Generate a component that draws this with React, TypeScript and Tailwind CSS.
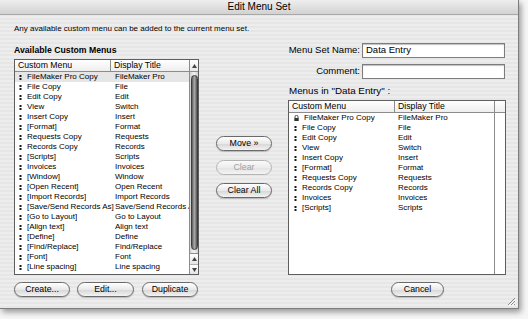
import React from 'react';

const available: [string, string][] = [
  ['FileMaker Pro Copy', 'FileMaker Pro'],
  ['File Copy', 'File'],
  ['Edit Copy', 'Edit'],
  ['View', 'Switch'],
  ['Insert Copy', 'Insert'],
  ['[Format]', 'Format'],
  ['Requests Copy', 'Requests'],
  ['Records Copy', 'Records'],
  ['[Scripts]', 'Scripts'],
  ['Invoices', 'Invoices'],
  ['[Window]', 'Window'],
  ['[Open Recent]', 'Open Recent'],
  ['[Import Records]', 'Import Records'],
  ['[Save/Send Records As]', 'Save/Send Records As'],
  ['[Go to Layout]', 'Go to Layout'],
  ['[Align text]', 'Align text'],
  ['[Define]', 'Define'],
  ['[Find/Replace]', 'Find/Replace'],
  ['[Font]', 'Font'],
  ['[Line spacing]', 'Line spacing'],
];

const inSet: [string, string][] = [
  ['FileMaker Pro Copy', 'FileMaker Pro'],
  ['File Copy', 'File'],
  ['Edit Copy', 'Edit'],
  ['View', 'Switch'],
  ['Insert Copy', 'Insert'],
  ['[Format]', 'Format'],
  ['Requests Copy', 'Requests'],
  ['Records Copy', 'Records'],
  ['Invoices', 'Invoices'],
  ['[Scripts]', 'Scripts'],
];

// little drag handle in front of each menu row
function Handle() {
  return (
    <svg width="3" height="5" viewBox="0 0 3 5" className="shrink-0">
      <rect x="0.5" y="0" width="2" height="2" fill="#1a1a1a" />
      <rect x="0.5" y="3" width="2" height="2" fill="#1a1a1a" />
    </svg>
  );
}

function Lock() {
  return (
    <svg width="5" height="6" viewBox="0 0 5 6" className="shrink-0">
      <path d="M1 3V1.8A1.5 1.5 0 0 1 4 1.8V3" fill="none" stroke="#222" strokeWidth="0.8" />
      <rect x="0.3" y="3" width="4.4" height="3" fill="#333" />
    </svg>
  );
}

function Arrow({ up }: { up?: boolean }) {
  return (
    <svg width="5" height="4" viewBox="0 0 5 4">
      <path d={up ? 'M2.5 0L5 4H0Z' : 'M0 0H5L2.5 4Z'} fill="#444" />
    </svg>
  );
}

function Pill({ children, w, disabled }: { children: React.ReactNode; w: string; disabled?: boolean }) {
  return (
    <button
      className={`${w} h-[15px] rounded-full border flex items-center justify-center text-[8.8px] leading-none ${
        disabled
          ? 'border-[#b4b4b4] text-[#a0a0a0] bg-[linear-gradient(to_bottom,#fafafa,#ececec_50%,#e2e2e2_51%,#f4f4f4)]'
          : 'border-[#6a6a6a] text-black bg-[linear-gradient(to_bottom,#ffffff,#e9e9e9_50%,#d5d5d5_51%,#f3f3f3)] shadow-[0_1px_1px_rgba(0,0,0,0.2)]'
      }`}
    >
      {children}
    </button>
  );
}

function Header({ w1, w2 }: { w1: string; w2: string }) {
  return (
    <div className="h-[12px] flex border-b border-[#8c8c8c] bg-[linear-gradient(to_bottom,#ffffff,#eeeeee)] text-[8.7px] leading-[11px] whitespace-nowrap">
      <div className={`${w1} border-r border-[#8c8c8c] pl-[3px]`}>Custom Menu</div>
      <div className={`${w2} pl-[3px]`}>Display Title</div>
    </div>
  );
}

export default function App() {
  return (
    <div className="w-[528px] h-[319px] bg-[#f6f6f6] overflow-hidden font-['Liberation_Sans',Arial,sans-serif] text-black">
      <div className="relative w-[519px] h-[309px] flex flex-col border-r border-b border-[#7d7d7d] shadow-[2px_3px_6px_rgba(0,0,0,0.4)] bg-[repeating-linear-gradient(to_bottom,#ededed_0px,#ededed_2px,#e6e6e6_2px,#e6e6e6_4px)]">
        {/* title bar */}
        <div className="h-[15px] shrink-0 flex items-center justify-center border-b border-[#a8a8a8] bg-[linear-gradient(to_bottom,#eeeeee,#d2d2d2)] text-[10px] leading-none">
          Edit Menu Set
        </div>

        <div className="flex flex-1 pl-[14px]">
          {/* left side */}
          <div className="w-[258px] flex flex-col">
            <p className="mt-[8px] h-[12px] leading-[12px] text-[8px] whitespace-nowrap">
              Any available custom menu can be added to the current menu set.
            </p>
            <h2 className="mt-[9px] h-[12px] leading-[12px] text-[8.7px] font-bold">Available Custom Menus</h2>
            <div className="mt-[3px] flex">
              <div className="w-[185px] flex flex-col">
                <div className="h-[216px] flex border border-[#5e5e5e] bg-white">
                  <div className="w-[174px] flex flex-col">
                    <Header w1="w-[96px]" w2="w-[78px]" />
                    {available.map(([a, b], i) => (
                      <div
                        key={a}
                        className={`h-[10px] flex items-center text-[8px] leading-[10px] whitespace-nowrap overflow-hidden ${
                          i === 0 ? 'bg-[#e6e6e6]' : ''
                        }`}
                      >
                        <div className="w-[96px] shrink-0 flex items-center pl-[4px] gap-[5px]">
                          <Handle />
                          <span>{a}</span>
                        </div>
                        <span className="pl-[4px]">{b}</span>
                      </div>
                    ))}
                  </div>
                  {/* scrollbar */}
                  <div className="w-[9px] flex flex-col border-l border-[#8c8c8c]">
                    <div className="h-[12px] flex items-center justify-center border-b border-[#8c8c8c] bg-[linear-gradient(to_bottom,#ffffff,#e8e8e8)]">
                      <Arrow up />
                    </div>
                    <div className="flex-1 py-[3px] bg-[linear-gradient(to_right,#d0d0d0,#f4f4f4_50%,#d0d0d0)]">
                      <div className="mx-auto w-[7px] h-full rounded-full border border-[#3c3c3c] bg-[linear-gradient(to_right,#5a5a5a,#a8a8a8_45%,#8a8a8a_70%,#4e4e4e)]" />
                    </div>
                    <div className="h-[11px] flex items-center justify-center border-t border-[#8c8c8c] bg-[linear-gradient(to_bottom,#ffffff,#e4e4e4)]">
                      <Arrow up />
                    </div>
                    <div className="h-[10px] flex items-center justify-center border-t border-[#b0b0b0] bg-[linear-gradient(to_bottom,#ffffff,#e4e4e4)]">
                      <Arrow />
                    </div>
                  </div>
                </div>
                <div className="mt-[7px] flex">
                  <Pill w="w-[56px]">Create...</Pill>
                  <div className="ml-[7px]">
                    <Pill w="w-[57px]">Edit...</Pill>
                  </div>
                  <div className="ml-[8px]">
                    <Pill w="w-[56px]">Duplicate</Pill>
                  </div>
                </div>
              </div>

              {/* middle buttons */}
              <div className="ml-[17px] w-[56px] flex flex-col pt-[77px]">
                <Pill w="w-[56px]">Move »</Pill>
                <div className="mt-[9px]">
                  <Pill w="w-[56px]" disabled>
                    Clear
                  </Pill>
                </div>
                <div className="mt-[8px]">
                  <Pill w="w-[56px]">Clear All</Pill>
                </div>
              </div>
            </div>
          </div>

          {/* right side */}
          <div className="ml-[16px] w-[218px] flex flex-col">
            <div className="mt-[28px] h-[15px] flex items-center">
              <label className="w-[72px] text-right text-[9.5px] whitespace-nowrap">Menu Set Name:</label>
              <div className="ml-[2px] w-[143px] h-[15px] flex items-center border border-[#7c7c7c] bg-white shadow-[inset_0_1px_1px_rgba(0,0,0,0.25)] pl-[3px] text-[9.5px]">
                Data Entry
              </div>
            </div>
            <div className="mt-[6px] h-[15px] flex items-center">
              <label className="w-[72px] text-right text-[9.5px]">Comment:</label>
              <div className="ml-[2px] w-[143px] h-[15px] border border-[#7c7c7c] bg-white shadow-[inset_0_1px_1px_rgba(0,0,0,0.25)]" />
            </div>
            <p className="mt-[6px] h-[12px] leading-[12px] text-[9.8px] pl-[1px] whitespace-nowrap">Menus in "Data Entry" :</p>
            <div className="mt-[3px] h-[175px] flex border border-[#5e5e5e] bg-white">
              <div className="w-[205px] flex flex-col">
                <Header w1="w-[106px]" w2="w-[99px]" />
                {inSet.map(([a, b], i) => (
                  <div key={a} className="h-[10px] flex items-center text-[8px] leading-[10px] whitespace-nowrap">
                    <div className="w-[106px] shrink-0 flex items-center pl-[5px] gap-[5px]">
                      {i === 0 ? <Lock /> : <Handle />}
                      <span>{a}</span>
                    </div>
                    <span className="pl-[3px]">{b}</span>
                  </div>
                ))}
              </div>
              <div className="flex-1 flex flex-col border-l border-[#8c8c8c]">
                <div className="h-[12px] border-b border-[#8c8c8c] bg-[linear-gradient(to_bottom,#ffffff,#eeeeee)]" />
                <div className="flex-1 bg-white" />
              </div>
            </div>
            <div className="mt-[7px] ml-[103px]">
              <Pill w="w-[53px]">Cancel</Pill>
            </div>
          </div>
        </div>

        {/* resize grip */}
        <svg width="10" height="10" viewBox="0 0 10 10" className="absolute right-[2px] bottom-[2px]">
          <path d="M9 2L2 9M9 5L5 9M9 8L8 9" stroke="#8a8a8a" strokeWidth="1" />
          <path d="M10 3L3 10M10 6L6 10" stroke="#ffffff" strokeWidth="0.8" />
        </svg>
      </div>
    </div>
  );
}
